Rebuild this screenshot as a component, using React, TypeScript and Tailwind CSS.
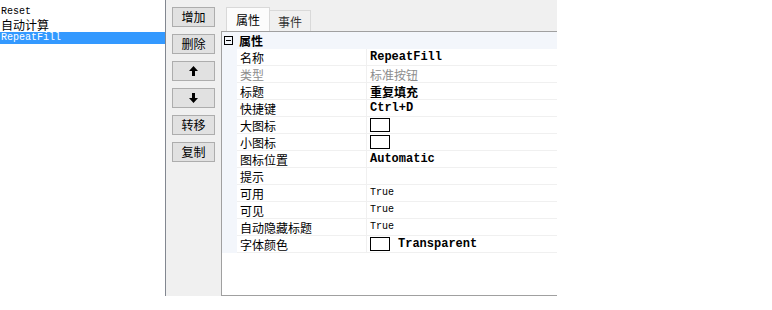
import React from "react";

const cjk = "font-['SimSun','Noto_Sans_CJK_SC',sans-serif]";
const mono = "font-['Liberation_Mono','DejaVu_Sans_Mono',monospace]";

type Row = {
  name: string;
  value?: string;
  kind?: "bold" | "plain" | "cjkBold" | "gray" | "swatch" | "swatchText";
  disabled?: boolean;
};

const rows: Row[] = [
  { name: "名称", value: "RepeatFill", kind: "bold" },
  { name: "类型", value: "标准按钮", kind: "gray", disabled: true },
  { name: "标题", value: "重复填充", kind: "cjkBold" },
  { name: "快捷键", value: "Ctrl+D", kind: "bold" },
  { name: "大图标", kind: "swatch" },
  { name: "小图标", kind: "swatch" },
  { name: "图标位置", value: "Automatic", kind: "bold" },
  { name: "提示" },
  { name: "可用", value: "True", kind: "plain" },
  { name: "可见", value: "True", kind: "plain" },
  { name: "自动隐藏标题", value: "True", kind: "plain" },
  { name: "字体颜色", value: "Transparent", kind: "swatchText" },
];

function Swatch() {
  return <span className="inline-block w-[20px] h-[14px] border border-black bg-white" />;
}

function Value({ row }: { row: Row }) {
  switch (row.kind) {
    case "bold":
      return <span className={`${mono} font-bold text-[12px] leading-[14px] text-black`}>{row.value}</span>;
    case "plain":
      return <span className={`${mono} text-[10px] leading-[14px] text-black`}>{row.value}</span>;
    case "cjkBold":
      return <span className={`${cjk} font-bold text-[12px] leading-[15px] text-black`}>{row.value}</span>;
    case "gray":
      return <span className={`${cjk} text-[12px] leading-[15px] text-[#8d8d8d]`}>{row.value}</span>;
    case "swatch":
      return <Swatch />;
    case "swatchText":
      return (
        <span className="flex items-center gap-[8px]">
          <Swatch />
          <span className={`${mono} font-bold text-[12px] leading-[14px] text-black`}>{row.value}</span>
        </span>
      );
    default:
      return null;
  }
}

function SideButton({ children }: { children: React.ReactNode }) {
  return (
    <button className="w-[43px] h-[20px] flex items-center justify-center bg-[#e1e1e1] border border-[#adadad] text-[12px] text-black leading-none">
      {children}
    </button>
  );
}

export default function App() {
  return (
    <div className="w-[772px] h-[310px] bg-white flex items-start">
      {/* item list */}
      <div className="w-[166px] h-[296px] bg-white border-r border-[#828790] pt-[6px] flex flex-col">
        <div className={`${mono} text-[10px] leading-[12px] h-[12px] pl-[1px] text-black`}>Reset</div>
        <div className={`${cjk} text-[12px] leading-[14px] h-[14px] pl-[1px] text-black`}>自动计算</div>
        <div className={`${mono} text-[10px] leading-[12px] h-[12px] pl-[1px] bg-[#3399ff] text-white`}>RepeatFill</div>
      </div>

      {/* action buttons */}
      <div className={`${cjk} w-[55px] h-[296px] bg-[#f0f0f0] flex flex-col items-center pt-[7px] gap-[7px]`}>
        <SideButton>增加</SideButton>
        <SideButton>删除</SideButton>
        <SideButton>
          <svg width="9" height="10" viewBox="0 0 9 10">
            <path d="M4.5 0 L9 5 L6 5 L6 10 L3 10 L3 5 L0 5 Z" fill="#000" />
          </svg>
        </SideButton>
        <SideButton>
          <svg width="9" height="10" viewBox="0 0 9 10">
            <path d="M4.5 10 L9 5 L6 5 L6 0 L3 0 L3 5 L0 5 Z" fill="#000" />
          </svg>
        </SideButton>
        <SideButton>转移</SideButton>
        <SideButton>复制</SideButton>
      </div>

      {/* property panel */}
      <div className={`${cjk} w-[336px] h-[296px] bg-[#f0f0f0] flex flex-col`}>
        <div className="h-[31px] flex items-end pl-[5px]">
          <div className="w-[44px] h-[24px] bg-[#fcfcfc] border border-b-0 border-[#d9d9d9] flex items-center justify-center text-[12px] leading-[15px] text-black">
            属性
          </div>
          <div className="w-[41px] h-[21px] bg-[#f0f0f0] border border-l-0 border-b-0 border-[#d9d9d9] flex items-center justify-center text-[12px] leading-[15px] text-[#333]">
            事件
          </div>
        </div>
        <div className="flex-1 bg-white border-t border-l border-b border-[#a0a0a0] flex flex-col">
          <div className="h-[17px] bg-[#f3f6fb] flex items-center pl-[2px] gap-[6px]">
            <span className="w-[9px] h-[9px] border border-black flex items-center justify-center">
              <span className="w-[5px] h-[1px] bg-black" />
            </span>
            <span className="font-bold text-[12px] leading-[15px] text-black">属性</span>
          </div>
          {rows.map((r) => (
            <div key={r.name} className="h-[17px] flex">
              <div className="w-[15px] bg-[#f3f6fb]" />
              <div
                className={`w-[130px] border-b border-r border-[#f0f0f0] flex items-center pl-[3px] text-[12px] leading-[15px] ${
                  r.disabled ? "text-[#8d8d8d]" : "text-black"
                }`}
              >
                {r.name}
              </div>
              <div className="flex-1 border-b border-[#f0f0f0] flex items-center pl-[3px]">
                <Value row={r} />
              </div>
            </div>
          ))}
        </div>
      </div>
    </div>
  );
}
